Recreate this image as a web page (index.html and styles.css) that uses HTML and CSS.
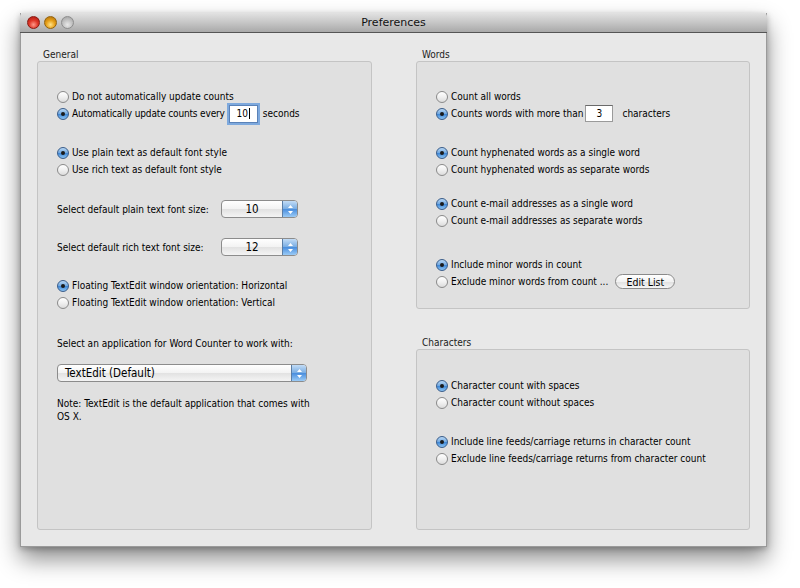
FILE: index.html
```html
<!DOCTYPE html>
<html>
<head>
<meta charset="utf-8">
<link rel="stylesheet" href="styles.css">
</head>
<body>
<div class="window">
  <div class="titlebar">
    <div class="lights">
      <span class="light red"></span>
      <span class="light yellow"></span>
      <span class="light grey"></span>
    </div>
    <div class="title">Preferences</div>
  </div>
  <div class="content">
    <section class="col">
      <div class="group-label">General</div>
      <div class="box box-general">
        <div class="group first">
          <div class="row"><span class="radio"></span>Do not automatically update counts</div>
          <div class="row"><span class="radio on"></span><span class="snug">Automatically update counts every</span><span class="field f-sec">10<i class="caret"></i></span>seconds</div>
        </div>
        <div class="group gap22">
          <div class="row"><span class="radio on"></span>Use plain text as default font style</div>
          <div class="row"><span class="radio"></span>Use rich text as default font style</div>
        </div>
        <div class="group gap22">
          <div class="select-row"><span class="sel-label">Select default plain text font size:</span><span class="popup small"><span class="pv">10</span><span class="arrows"><svg width="7" height="11" viewBox="0 0 7 11"><path d="M3.5 1 L6 4 H1 Z M3.5 10 L6 7 H1 Z" fill="#fff"/></svg></span></span></div>
        </div>
        <div class="group gap20">
          <div class="select-row"><span class="sel-label">Select default rich text font size:</span><span class="popup small"><span class="pv">12</span><span class="arrows"><svg width="7" height="11" viewBox="0 0 7 11"><path d="M3.5 1 L6 4 H1 Z M3.5 10 L6 7 H1 Z" fill="#fff"/></svg></span></span></div>
        </div>
        <div class="group gap21">
          <div class="row"><span class="radio on"></span>Floating TextEdit window orientation: Horizontal</div>
          <div class="row"><span class="radio"></span>Floating TextEdit window orientation: Vertical</div>
        </div>
        <div class="group gap24">
          <div class="row">Select an application for Word Counter to work with:</div>
        </div>
        <div class="group gap12">
          <div class="popup wide"><span class="pv left">TextEdit (Default)</span><span class="arrows"><svg width="7" height="11" viewBox="0 0 7 11"><path d="M3.5 1 L6 4 H1 Z M3.5 10 L6 7 H1 Z" fill="#fff"/></svg></span></div>
        </div>
        <div class="group gap15">
          <p class="note">Note: TextEdit is the default application that comes with OS X.</p>
        </div>
      </div>
    </section>
    <section class="col">
      <div class="group-label">Words</div>
      <div class="box box-words">
        <div class="group first">
          <div class="row"><span class="radio"></span>Count all words</div>
          <div class="row"><span class="radio on"></span>Counts words with more than<span class="field f-words">3</span>characters</div>
        </div>
        <div class="group gap22">
          <div class="row"><span class="radio on"></span>Count hyphenated words as a single word</div>
          <div class="row"><span class="radio"></span>Count hyphenated words as separate words</div>
        </div>
        <div class="group gap17">
          <div class="row"><span class="radio on"></span>Count e-mail addresses as a single word</div>
          <div class="row"><span class="radio"></span>Count e-mail addresses as separate words</div>
        </div>
        <div class="group gap27">
          <div class="row"><span class="radio on"></span>Include minor words in count</div>
          <div class="row"><span class="radio"></span>Exclude minor words from count ...<span class="button">Edit List</span></div>
        </div>
      </div>
      <div class="group-label chars-label">Characters</div>
      <div class="box box-chars">
        <div class="group first-c">
          <div class="row"><span class="radio on"></span>Character count with spaces</div>
          <div class="row"><span class="radio"></span>Character count without spaces</div>
        </div>
        <div class="group gap22">
          <div class="row"><span class="radio on"></span>Include line feeds/carriage returns in character count</div>
          <div class="row"><span class="radio"></span>Exclude line feeds/carriage returns from character count</div>
        </div>
      </div>
    </section>
  </div>
</div>
</body>
</html>
```
FILE: styles.css
```css
* { box-sizing: border-box; }
html, body { margin: 0; padding: 0; background: #fff; }
body {
  width: 800px;
  height: 588px;
  overflow: hidden;
  font-family: "DejaVu Sans Condensed", "Liberation Sans", sans-serif;
  font-size: 10px;
  color: #000;
}
.window {
  margin: 13px 0 0 20px;
  width: 747px;
  height: 534px;
  background: #e8e8e8;
  border: 1px solid #9a9a9a;
  border-top: none;
  box-shadow: 0 12px 22px rgba(0,0,0,0.45), 0 2px 6px rgba(0,0,0,0.25);
  display: flex;
  flex-direction: column;
}
.titlebar {
  height: 20px;
  background: linear-gradient(#e2e2e2, #c6c6c6 50%, #a9a9a9);
  border-bottom: 1px solid #555;
  border-radius: 4px 4px 0 0;
  display: flex;
  align-items: center;
  position: relative;
  margin: 0 -1px;
}
.lights { display: flex; gap: 4px; padding-left: 7px; }
.light {
  width: 13px; height: 13px; border-radius: 50%;
  display: block;
}
.light.red {
  background: radial-gradient(circle at 50% 70%, #ff9a8a 0%, #e0392a 45%, #a5130c 100%);
  border: 1px solid #8a1a12;
}
.light.yellow {
  background: radial-gradient(circle at 50% 70%, #ffe38a 0%, #e8a11a 45%, #a86a06 100%);
  border: 1px solid #94620c;
}
.light.grey {
  background: radial-gradient(circle at 50% 70%, #e8e8e8 0%, #c2c2c2 50%, #9c9c9c 100%);
  border: 1px solid #8d8d8d;
}
.title {
  position: absolute;
  left: 0; right: 0; top: 0; bottom: 0;
  text-align: center;
  line-height: 20px;
  font-family: "DejaVu Sans", sans-serif;
  font-size: 11px;
  color: #111;
  pointer-events: none;
}
.content {
  flex: 1;
  display: flex;
  gap: 44px;
  padding: 15px 16px 16px 16px;
}
.col {
  width: 335px;
  display: flex;
  flex-direction: column;
}
.col + .col { width: 334px; }
.group-label {
  height: 13px;
  line-height: 13px;
  padding-left: 6px;
  color: #222;
}
.chars-label { margin-top: 27px; }
.box {
  background: #e0e0e0;
  border: 1px solid #c4c4c4;
  border-radius: 3px;
  padding-left: 19px;
}
.box-general { flex: 1; }
.box-words { height: 248px; }
.box-chars { flex: 1; }
.group { display: flex; flex-direction: column; }
.first { margin-top: 26px; }
.first-c { margin-top: 27px; }
.gap12 { margin-top: 12px; }
.gap15 { margin-top: 15px; }
.gap17 { margin-top: 17px; }
.gap20 { margin-top: 20px; }
.gap21 { margin-top: 21px; }
.gap22 { margin-top: 22px; }
.gap24 { margin-top: 24px; }
.gap27 { margin-top: 27px; }
.row {
  height: 17px;
  display: flex;
  align-items: center;
  white-space: nowrap;
}
.snug { letter-spacing: -0.15px; }
.radio {
  width: 12px; height: 12px;
  border-radius: 50%;
  border: 1px solid #8a8a8a;
  background: linear-gradient(#ffffff, #f0f0f0 50%, #dcdcdc);
  margin-right: 3px;
  flex: none;
  position: relative;
}
.radio.on {
  border-color: #3a5d8a;
  background: linear-gradient(#b8d8f6, #6fa6de 50%, #3d86d6 52%, #8cc4f4);
}
.radio.on::after {
  content: "";
  position: absolute;
  left: 3px; top: 3px;
  width: 4px; height: 4px;
  border-radius: 50%;
  background: #1a1a1a;
}
.field {
  display: inline-flex;
  align-items: center;
  justify-content: center;
  height: 18px;
  background: #fff;
  border: 1px solid #9a9a9a;
  border-top-color: #6a6a6a;
  margin: 0 5px 0 4px;
  position: relative;
  letter-spacing: 0;
}
.f-sec {
  width: 29px;
  box-shadow: 0 0 0 2px #7ea9dd;
  border-color: #5a82b8;
}
.f-words { width: 28px; height: 17px; margin: 0 9px 0 2px; }
.caret {
  display: inline-block;
  width: 1px; height: 11px;
  background: #000;
  margin-left: 1px;
}
.select-row {
  height: 18px;
  display: flex;
  align-items: center;
}
.sel-label { width: 164px; flex: none; }
.popup {
  height: 18px;
  border: 1px solid #8c8c8c;
  border-radius: 4px;
  background: linear-gradient(#ffffff, #f3f3f3 50%, #e2e2e2 52%, #f4f4f4);
  display: flex;
  align-items: center;
  overflow: hidden;
  font-size: 11.5px;
}
.popup.small { width: 77px; }
.popup.wide { width: 250px; }
.pv { flex: 1; text-align: center; }
.pv.left { text-align: left; padding-left: 7px; }
.arrows {
  width: 15px;
  height: 100%;
  background: linear-gradient(#c2dcf6, #78ace2 50%, #4a8ede 52%, #9bcbf6);
  border-left: 1px solid #5b7ea6;
  display: flex;
  align-items: center;
  justify-content: center;
  flex: none;
}
.note {
  margin: 0;
  width: 262px;
  line-height: 13px;
}
.button {
  margin-left: 7px;
  width: 60px;
  height: 15px;
  border: 1px solid #8a8a8a;
  border-radius: 8px;
  background: linear-gradient(#ffffff, #f2f2f2 50%, #e0e0e0 52%, #f6f6f6);
  display: inline-flex;
  align-items: center;
  justify-content: center;
  font-size: 10.5px;
}
```
